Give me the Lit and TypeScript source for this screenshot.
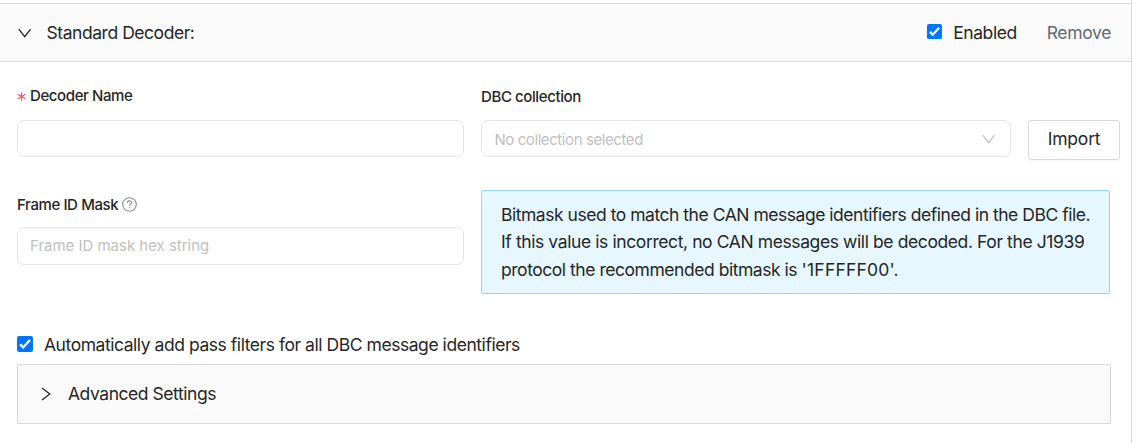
import { LitElement, html, css, svg } from "lit";
import { customElement, property } from "lit/decorators.js";

@customElement("check-mark-box")
class CheckMarkBox extends LitElement {
  static styles = css`
    :host { display: block; flex: none; }
    svg { display: block; width: 100%; height: 100%; }
  `;
  render() {
    return html`<svg viewBox="0 0 16 16">
      <rect width="16" height="16" rx="2" fill="#0075ff" />
      <path d="M3.1 8.4 6.2 11.4 12.9 4" fill="none" stroke="#fff" stroke-width="2.3" />
    </svg>`;
  }
}

@customElement("chevron-icon")
class ChevronIcon extends LitElement {
  @property() direction = "down";
  static styles = css`
    :host { display: block; flex: none; width: 14px; height: 14px; }
    svg { display: block; width: 100%; height: 100%; }
  `;
  render() {
    const d = this.direction === "right" ? "M3 1.1 10.8 7 3 12.9" : "M.8 3.1 6.7 10.7 12.6 3.1";
    return html`<svg viewBox="0 0 14 14" fill="none" stroke="currentColor" stroke-width="1.3">
      ${svg`<path d=${d} />`}
    </svg>`;
  }
}

@customElement("app-root")
class AppRoot extends LitElement {
  static styles = css`
    :host {
      display: block;
      height: 443px;
      overflow: hidden;
      background: #fff;
      color: #262626;
      font: 17.5px/27.5px Inter, sans-serif;
      letter-spacing: -0.45px;
    }
    * { box-sizing: border-box; }
    .panel { width: 1132px; height: 443px; border-right: 1px solid #d9d9d9; padding-top: 3px; }
    .header {
      display: flex; align-items: center; height: 59px;
      padding: 0 20px 0 18px;
      background: #fafafa;
      border: solid #d9d9d9; border-width: 1px 0;
    }
    .title { margin-left: 14.5px; flex: 1; }
    .enabled { width: 15px; height: 15px; margin: -2px 11px 0 0; }
    .remove { margin-left: 30px; color: #5f6b73; letter-spacing: -0.35px; }
    .form {
      display: grid;
      grid-template-columns: 447px 639px;
      column-gap: 17px;
      padding: 0 0 0 17px;
    }
    .field { padding-top: 22px; height: 128px; }
    .mask { padding-top: 0; height: 140px; }
    .label {
      display: flex; align-items: center; height: 24px; margin-bottom: 12px;
      font-size: 15px; font-weight: 500; line-height: 24px; letter-spacing: -0.4px;
    }
    .dbc { padding-top: 2px; }
    .mask .label { margin-top: 3px; margin-bottom: 10px; }
    .star { color: #ff4d4f; width: 9px; height: 9px; margin-right: 4px; flex: none; }
    .help { width: 15px; height: 15px; margin: -1px 0 0 4px; color: #8c8c8c; }
    .input {
      display: flex; align-items: center; justify-content: space-between;
      height: 37px; padding: 0 14px 0 12px;
      border: 1px solid #e4e4e4; border-radius: 7px;
      background: #fff; color: #bfbfbf; font-size: 15px;
    }
    .mask .input { height: 38px; }
    .hex { letter-spacing: -0.02px; }
    .placeholder { letter-spacing: -0.41px; padding: 2px 0 0 0.4px; }
    .row { display: flex; align-items: flex-start; gap: 17px; }
    .select { width: 530px; }
    .button {
      width: 92px; height: 40px; border: 1px solid #d9d9d9; border-radius: 3px;
      text-align: center; line-height: 36px; letter-spacing: -0.2px;
      box-shadow: 0 2px 0 rgba(0, 0, 0, 0.02);
    }
    .info {
      width: 629px; height: 104px; padding: 10px 0 0 19px;
      border: 1px solid #91d5ff; border-radius: 2px; background: #e6f7ff;
      white-space: nowrap;
    }
    .line { height: 27.5px; }
    .first { letter-spacing: -0.47px; }
    .second { letter-spacing: -0.4px; line-height: 26.6px; }
    .third { letter-spacing: -0.46px; }
    .value { letter-spacing: 0.2px; }
    .auto { display: flex; align-items: center; height: 28px; margin: 1px 0 5px 17px; }
    .auto check-mark-box { width: 16px; height: 16px; margin: -2px 11px 0 0; }
    .advanced {
      display: flex; align-items: center; width: 1094px; height: 60px;
      margin-left: 17px; padding-left: 21px;
      border: 1px solid #d9d9d9; border-radius: 2px; background: #fafafa;
    }
    .advanced .text { margin-left: 15px; }
  `;

  render() {
    return html`<div class="panel">
      <div class="header">
        <chevron-icon></chevron-icon>
        <span class="title">Standard Decoder:</span>
        <check-mark-box class="enabled"></check-mark-box>
        <span class="enabled-text">Enabled</span>
        <span class="remove">Remove</span>
      </div>
      <div class="form">
        <div class="field">
          <div class="label">
            <svg class="star" viewBox="0 0 9 9" stroke="currentColor" stroke-width="1.1">
              <path d="M4.5 .2V8.8M.5 2.2 8.5 6.8M8.5 2.2.5 6.8" />
            </svg>
            <span class="name">Decoder Name</span>
          </div>
          <div class="input"></div>
        </div>
        <div class="field">
          <div class="label"><span class="dbc">DBC collection</span></div>
          <div class="row">
            <div class="input select"><span class="placeholder">No collection selected</span><chevron-icon></chevron-icon></div>
            <div class="button">Import</div>
          </div>
        </div>
        <div class="field mask">
          <div class="label">
            <span class="frame">Frame ID Mask</span>
            <svg class="help" viewBox="0 0 15 15" fill="none" stroke="currentColor" stroke-width="1.1">
              <circle cx="7.5" cy="7.5" r="6.8" />
              <path d="M5.4 6.1C5.4 3.2 9.6 3.2 9.6 5.9 9.6 7.4 7.5 7.2 7.5 9" />
              <path d="M7.5 10.1V11.3" />
            </svg>
          </div>
          <div class="input"><span class="hex">Frame ID mask hex string</span></div>
        </div>
        <div class="info">
          <div class="line first">Bitmask used to match the CAN message identifiers defined in the DBC file.</div>
          <div class="line second">If this value is incorrect, no CAN messages will be decoded. For the J1939</div>
          <div class="line third">protocol the recommended bitmask is <span class="value">'1FFFFF00'.</span></div>
        </div>
      </div>
      <div class="auto">
        <check-mark-box></check-mark-box>
        <span>Automatically add pass filters for all DBC message identifiers</span>
      </div>
      <div class="advanced">
        <chevron-icon direction="right"></chevron-icon>
        <span class="text">Advanced Settings</span>
      </div>
    </div>`;
  }
}
